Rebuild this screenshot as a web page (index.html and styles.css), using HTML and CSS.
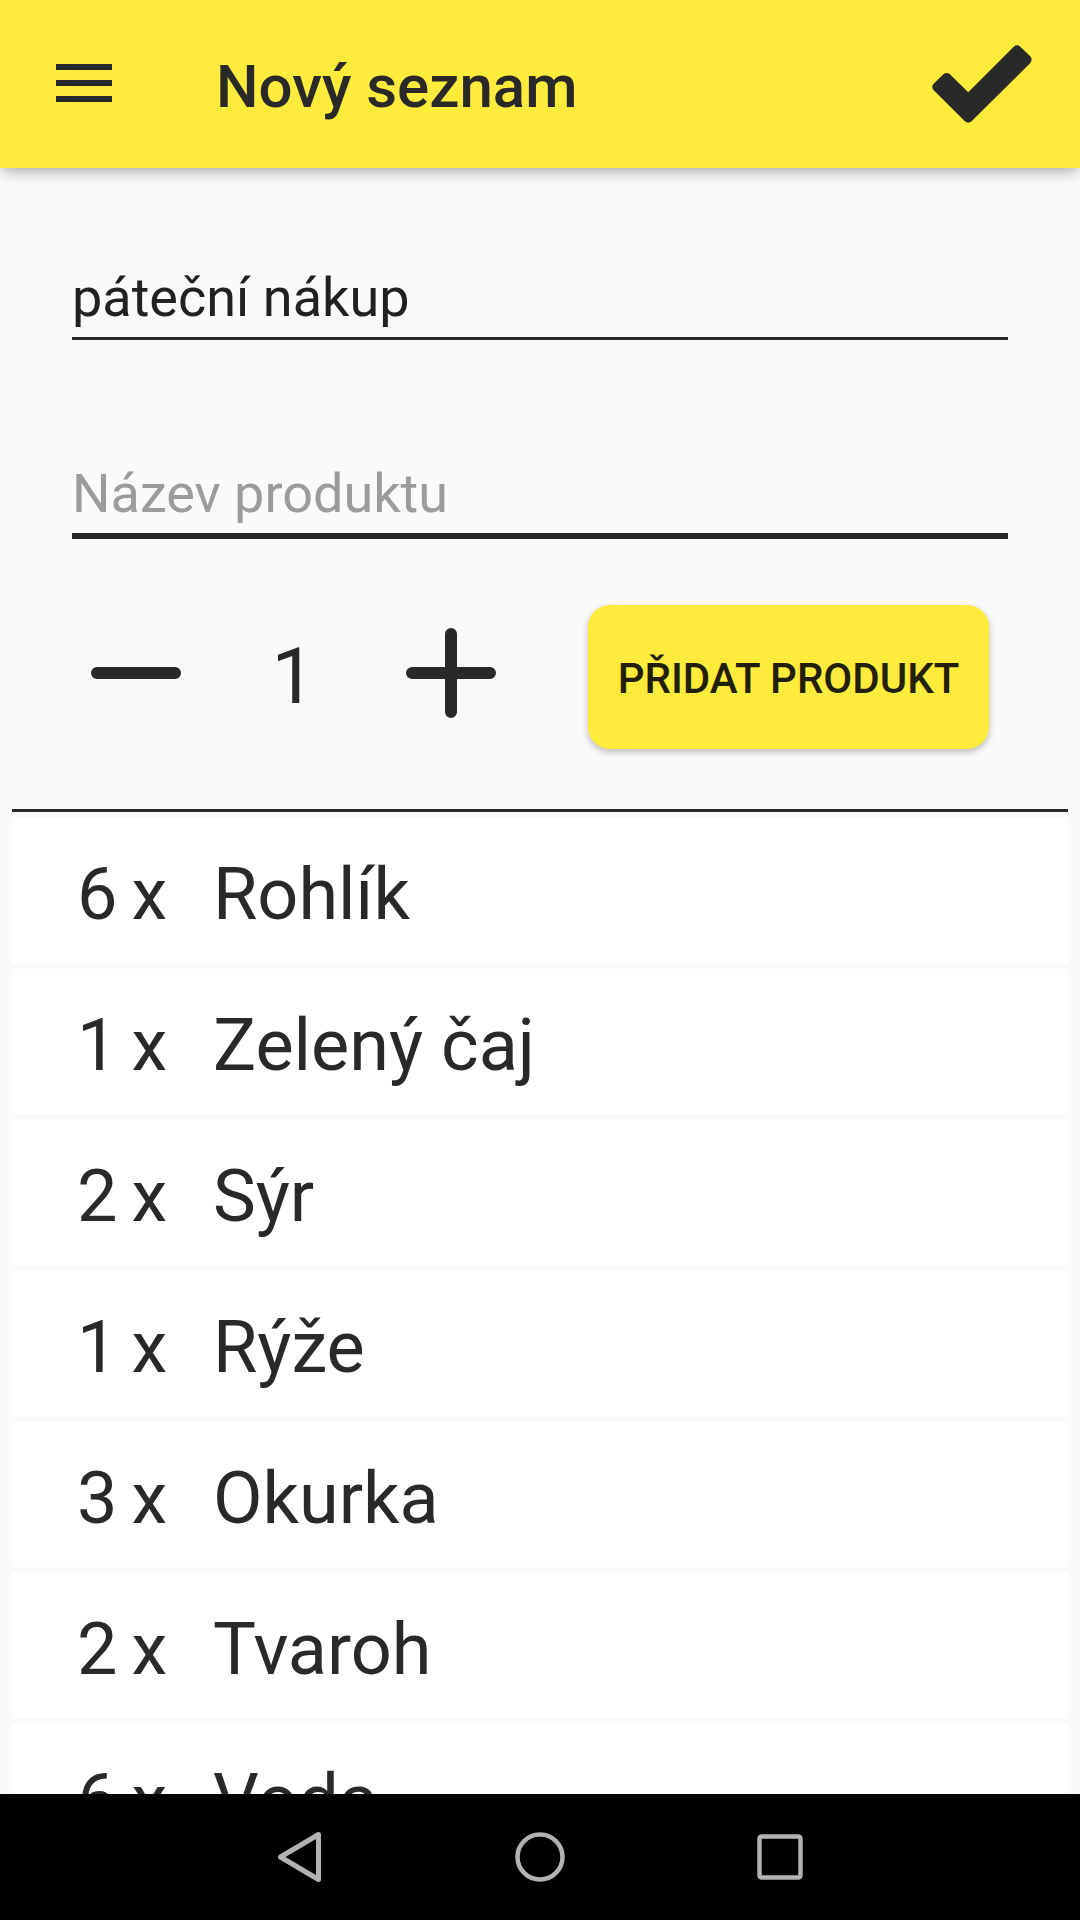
FILE: index.html
```html
<!DOCTYPE html>
<html lang="cs">
<head>
  <meta charset="utf-8">
  <meta name="viewport" content="width=device-width, initial-scale=1">
  <title>Nový seznam</title>
  <link rel="stylesheet" href="styles.css">
</head>
<body>
  <div class="app">
    <header class="app-bar">
      <button class="icon-button" type="button" aria-label="Menu">
        <svg width="56" height="40" viewBox="0 0 56 40" fill="currentColor" aria-hidden="true">
          <path d="M0 0h56v6H0zM0 16h56v6H0zM0 32h56v6H0z"/>
        </svg>
      </button>
      <h1 class="app-title">Nový seznam</h1>
      <button class="icon-button" type="submit" form="list-form" aria-label="Uložit">
        <svg width="100" height="78" viewBox="156 74 301 235" fill="currentColor" aria-hidden="true">
          <path d="M265 216L210 162Q200 154 190 162L161 191Q152 200 161 210L255 304Q265 313 275 304L452 128Q460 118 452 108L422 79Q412 71 402 79Z"/>
        </svg>
      </button>
    </header>

    <main class="content">
      <form class="list-form" id="list-form">
        <input class="field" type="text" value="páteční nákup" aria-label="Název seznamu">
        <input class="field field-active" type="text" placeholder="Název produktu" aria-label="Název produktu">
        <div class="add-row">
          <div class="stepper">
            <button class="step" type="button" aria-label="Ubrat">
              <svg width="90" height="90" viewBox="0 0 90 90" fill="none" stroke="currentColor" stroke-width="12" stroke-linecap="round" aria-hidden="true">
                <path d="M6 45h78"/>
              </svg>
            </button>
            <output class="quantity">1</output>
            <button class="step" type="button" aria-label="Přidat">
              <svg width="90" height="90" viewBox="0 0 90 90" fill="none" stroke="currentColor" stroke-width="12" stroke-linecap="round" aria-hidden="true">
                <path d="M6 45h78M45 6v78"/>
              </svg>
            </button>
          </div>
          <button class="add-button" type="button">PŘIDAT PRODUKT</button>
        </div>
      </form>

      <ul class="products">
        <li class="product"><span class="count"><span>6</span><span>x</span></span><span>Rohlík</span></li>
        <li class="product"><span class="count"><span>1</span><span>x</span></span><span>Zelený čaj</span></li>
        <li class="product"><span class="count"><span>2</span><span>x</span></span><span>Sýr</span></li>
        <li class="product"><span class="count"><span>1</span><span>x</span></span><span>Rýže</span></li>
        <li class="product"><span class="count"><span>3</span><span>x</span></span><span>Okurka</span></li>
        <li class="product"><span class="count"><span>2</span><span>x</span></span><span>Tvaroh</span></li>
        <li class="product"><span class="count"><span>6</span><span>x</span></span><span>Voda</span></li>
      </ul>
    </main>

    <nav class="system-bar" aria-label="Systém">
      <button class="system-button" type="button" aria-label="Zpět">
        <svg width="52" height="52" viewBox="0 0 52 52" fill="none" stroke="currentColor" stroke-width="5" stroke-linejoin="round" aria-hidden="true">
          <path d="M44.500 3.500V48.500L6.500 26Z" stroke-linecap="round"/>
        </svg>
      </button>
      <button class="system-button" type="button" aria-label="Domů">
        <svg width="52" height="52" viewBox="0 0 52 52" fill="none" stroke="currentColor" stroke-width="4.500" aria-hidden="true">
          <circle cx="26" cy="26" r="22.500"/>
        </svg>
      </button>
      <button class="system-button" type="button" aria-label="Přehled">
        <svg width="52" height="52" viewBox="0 0 52 52" fill="none" stroke="currentColor" stroke-width="4.500" aria-hidden="true">
          <rect x="5.500" y="5.500" width="41" height="41" rx="2"/>
        </svg>
      </button>
    </nav>
  </div>
</body>
</html>
```

FILE: styles.css
```css
:root {
  --ink: #292929;
  --accent: #ffeb3b;
  --page: #fafafa;
}

* {
  box-sizing: border-box;
}

body {
  margin: 0;
  background: var(--page);
  color: var(--ink);
  font-family: Roboto, "Liberation Sans", sans-serif;
}

button {
  margin: 0;
  padding: 0;
  border: 0;
  background: none;
  color: inherit;
  font: inherit;
  cursor: pointer;
}

svg {
  display: block;
}

.app {
  display: flex;
  flex-direction: column;
  height: 100vh;
}

.app-bar {
  display: flex;
  flex: none;
  align-items: center;
  height: 168px;
  padding: 0 48px 0 56px;
  background: var(--accent);
  box-shadow: 0 5px 14px -2px rgba(0, 0, 0, 0.34);
}

.icon-button {
  flex: none;
}

.app-title {
  flex: 1;
  margin: 0;
  padding: 6px 0 0 104px;
  font-size: 60px;
  font-weight: 500;
  line-height: 70px;
}

.content {
  flex: 1;
  min-height: 0;
  overflow: hidden;
}

.list-form {
  padding: 98px 72px 60px;
}

.field {
  display: block;
  width: 100%;
  height: 74px;
  margin: 0 0 122px;
  padding: 0 0 8px;
  border: 0;
  border-bottom: 3px solid var(--ink);
  border-radius: 0;
  outline: 0;
  background: none;
  color: #212121;
  font-family: inherit;
  font-size: 54px;
  line-height: 63px;
}

.field-active {
  height: 77px;
  margin-bottom: 66px;
  border-bottom-width: 6px;
}

.field::placeholder {
  color: #9b9b9b;
  opacity: 1;
}

.add-row {
  display: flex;
  gap: 65px;
  margin: 0 19px 0 -8px;
}

.stepper {
  display: flex;
  flex: 1;
  align-items: flex-start;
}

.step {
  display: flex;
  align-items: center;
  justify-content: center;
  width: 144px;
  height: 136px;
}

.quantity {
  flex: 1;
  font-size: 78px;
  line-height: 144px;
  text-align: center;
}

.add-button {
  flex: none;
  width: 401px;
  height: 144px;
  padding-top: 2px;
  border-radius: 22px;
  background: var(--accent);
  box-shadow: 0 3px 7px rgba(0, 0, 0, 0.26);
  color: #221f08;
  font-size: 42px;
  font-weight: 500;
}

.products {
  display: grid;
  gap: 6px;
  margin: 0 12px;
  padding: 6px 0 0;
  border-top: 3px solid var(--ink);
  list-style: none;
}

.product {
  display: flex;
  padding: 35px 65px 26px;
  background: #fff;
  font-size: 72px;
  line-height: 84px;
}

.count {
  display: flex;
  flex: none;
  gap: 14px;
  width: 136px;
}

.system-bar {
  display: flex;
  flex: none;
  justify-content: center;
  height: 126px;
  background: #000;
  color: #b2b2b2;
}

.system-button {
  display: flex;
  align-items: center;
  justify-content: center;
  width: 240px;
}
```
